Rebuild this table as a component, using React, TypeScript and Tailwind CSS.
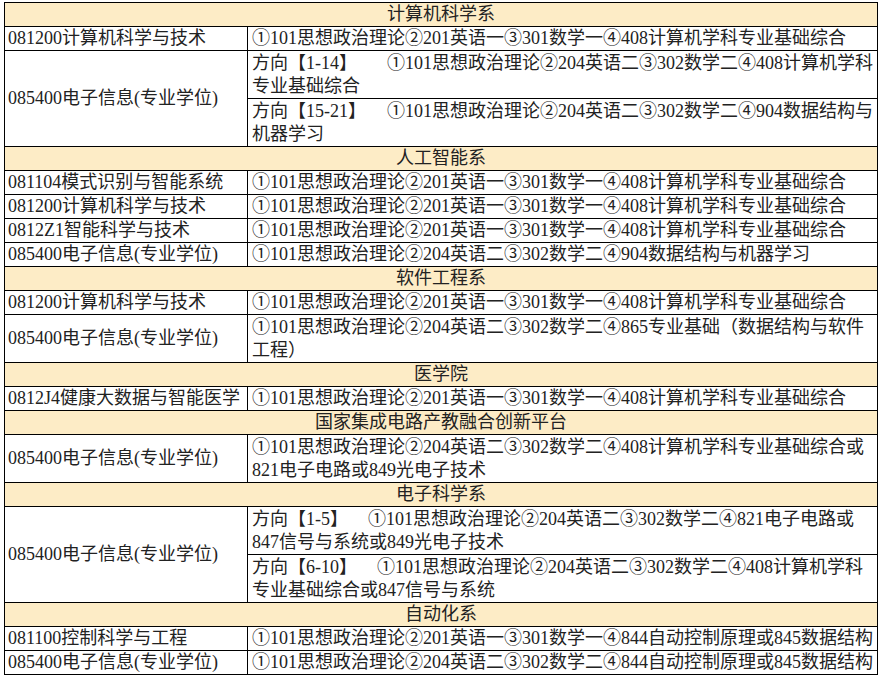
type Cell = {
  prefix?: string;
  prefixW?: string;
  lines: string[];
};

type Row = {
  code: string;
  cells: Cell[];
};

type Section = {
  title: string;
  rows: Row[];
};

const p1 = "①101思想政治理论②201英语一③301数学一④408计算机学科专业基础综合";

const sections: Section[] = [
  {
    title: "计算机科学系",
    rows: [
      { code: "081200计算机科学与技术", cells: [{ lines: [p1] }] },
      {
        code: "085400电子信息(专业学位)",
        cells: [
          {
            prefix: "方向【1-14】",
            prefixW: "w-[135px]",
            lines: ["①101思想政治理论②204英语二③302数学二④408计算机学科", "专业基础综合"],
          },
          {
            prefix: "方向【15-21】",
            prefixW: "w-[135px]",
            lines: ["①101思想政治理论②204英语二③302数学二④904数据结构与", "机器学习"],
          },
        ],
      },
    ],
  },
  {
    title: "人工智能系",
    rows: [
      { code: "081104模式识别与智能系统", cells: [{ lines: [p1] }] },
      { code: "081200计算机科学与技术", cells: [{ lines: [p1] }] },
      { code: "0812Z1智能科学与技术", cells: [{ lines: [p1] }] },
      {
        code: "085400电子信息(专业学位)",
        cells: [{ lines: ["①101思想政治理论②204英语二③302数学二④904数据结构与机器学习"] }],
      },
    ],
  },
  {
    title: "软件工程系",
    rows: [
      { code: "081200计算机科学与技术", cells: [{ lines: [p1] }] },
      {
        code: "085400电子信息(专业学位)",
        cells: [
          {
            lines: ["①101思想政治理论②204英语二③302数学二④865专业基础（数据结构与软件", "工程）"],
          },
        ],
      },
    ],
  },
  {
    title: "医学院",
    rows: [{ code: "0812J4健康大数据与智能医学", cells: [{ lines: [p1] }] }],
  },
  {
    title: "国家集成电路产教融合创新平台",
    rows: [
      {
        code: "085400电子信息(专业学位)",
        cells: [
          {
            lines: ["①101思想政治理论②204英语二③302数学二④408计算机学科专业基础综合或", "821电子电路或849光电子技术"],
          },
        ],
      },
    ],
  },
  {
    title: "电子科学系",
    rows: [
      {
        code: "085400电子信息(专业学位)",
        cells: [
          {
            prefix: "方向【1-5】",
            prefixW: "w-[116px]",
            lines: ["①101思想政治理论②204英语二③302数学二④821电子电路或", "847信号与系统或849光电子技术"],
          },
          {
            prefix: "方向【6-10】",
            prefixW: "w-[125px]",
            lines: ["①101思想政治理论②204英语二③302数学二④408计算机学科", "专业基础综合或847信号与系统"],
          },
        ],
      },
    ],
  },
  {
    title: "自动化系",
    rows: [
      {
        code: "081100控制科学与工程",
        cells: [{ lines: ["①101思想政治理论②201英语一③301数学一④844自动控制原理或845数据结构"] }],
      },
      {
        code: "085400电子信息(专业学位)",
        cells: [{ lines: ["①101思想政治理论②204英语二③302数学二④844自动控制原理或845数据结构"] }],
      },
    ],
  },
];

function SubCell({ cell, bordered }: { cell: Cell; bordered: boolean }) {
  const height = cell.lines.length > 1 ? "h-[47px]" : "h-[23px]";
  return (
    <div
      className={`${height} box-content flex flex-col justify-center overflow-hidden whitespace-nowrap pl-[4px] ${
        bordered ? "border-b border-black" : ""
      }`}
    >
      {cell.lines.map((line, i) => (
        <div key={i} className="flex h-[23px] shrink-0 items-center">
          {i === 0 && cell.prefix && (
            <span className={`inline-block shrink-0 ${cell.prefixW}`}>{cell.prefix}</span>
          )}
          <span>{line}</span>
        </div>
      ))}
    </div>
  );
}

function DataRow({ row, last }: { row: Row; last: boolean }) {
  return (
    <div className={`flex ${last ? "" : "border-b border-black"}`}>
      <div className="flex w-[243px] shrink-0 items-center overflow-hidden whitespace-nowrap border-r border-black pl-[3px]">
        {row.code}
      </div>
      <div className="flex min-w-0 flex-1 flex-col">
        {row.cells.map((cell, i) => (
          <SubCell key={i} cell={cell} bordered={i < row.cells.length - 1} />
        ))}
      </div>
    </div>
  );
}

export default function App() {
  return (
    <div className="h-[677px] w-[880px] overflow-hidden bg-white pl-[4px] pt-[2px] text-[18px] leading-[23px] text-[#222] [font-family:'Liberation_Serif','Noto_Sans_CJK_SC',serif]">
      <div className="w-[874px] border border-black">
        {sections.map((section, si) => (
          <div key={section.title}>
            <div className="flex h-[24px] items-center justify-center border-b border-black bg-[#fdecc6]">
              {section.title}
            </div>
            {section.rows.map((row, ri) => (
              <DataRow
                key={ri}
                row={row}
                last={si === sections.length - 1 && ri === section.rows.length - 1}
              />
            ))}
          </div>
        ))}
      </div>
    </div>
  );
}
